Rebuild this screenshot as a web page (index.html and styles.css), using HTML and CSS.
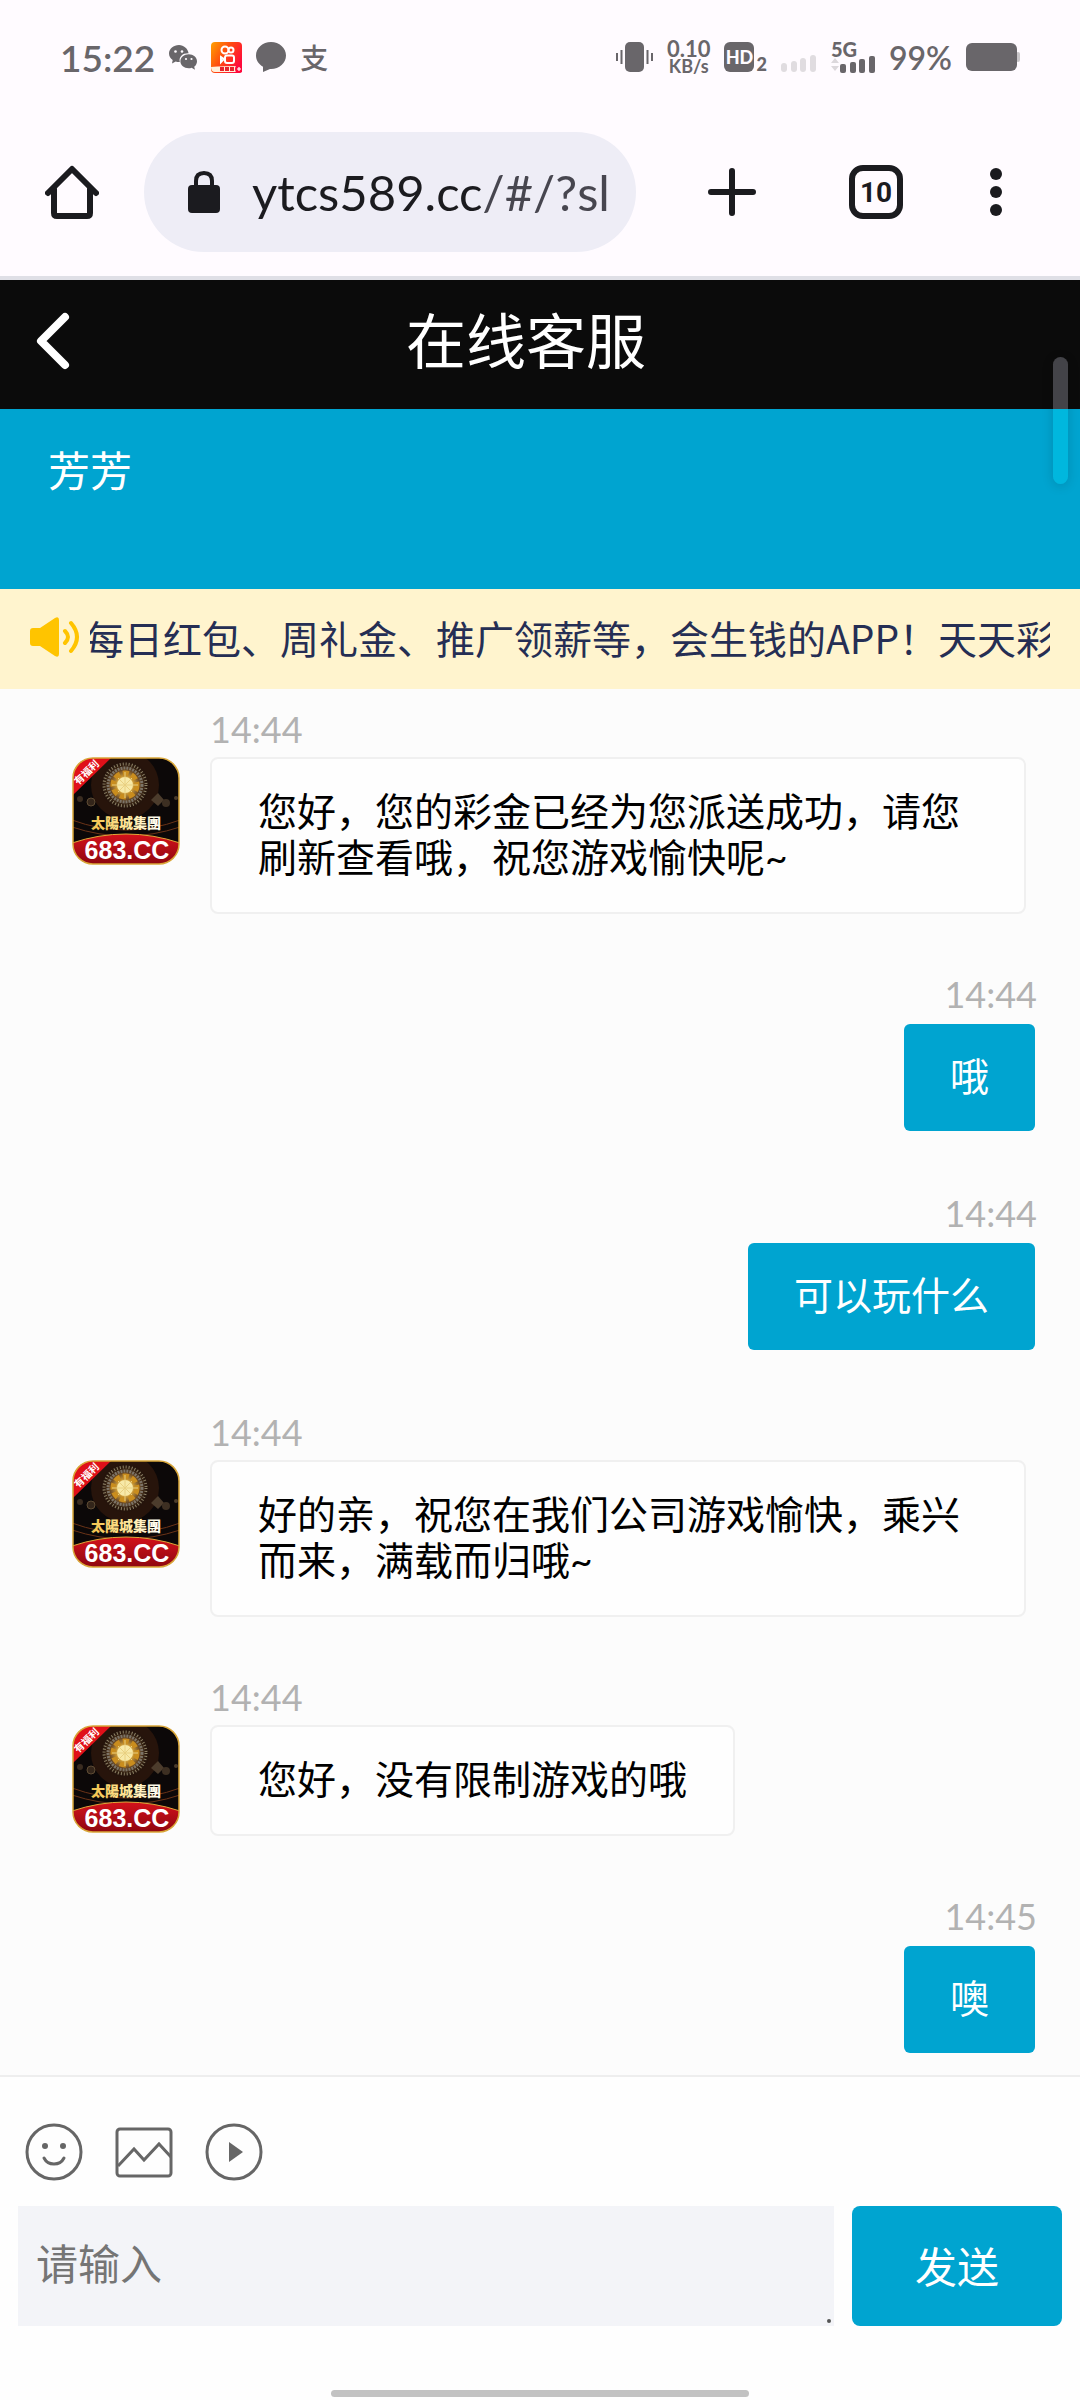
FILE: index.html
```html
<!DOCTYPE html>
<html lang="zh-CN">
<head>
    <meta charset="utf-8">
    <meta name="viewport" content="width=device-width, initial-scale=1">
    <title>在线客服</title>
    <link rel="stylesheet" href="styles.css">
</head>
<body>
    <div class="page">
        <div class="status">
            <div class="status-side">
                <span class="clock">15:22</span>
                <svg width="28" height="25" viewBox="0 0 28 25">
                    <path fill="#69666a" d="M10 0C4.500 0 0 3.800 0 8.500c0 2.700 1.500 5 3.700 6.500L3 18.500l3.700-2q1.600.5 3.300.5h.8C9.500 11.500 14 8 19.600 8.300 18.800 3.600 14.800 0 10 0z"/>
                    <path fill="#69666a" d="M19.700 9.300c-4.600 0-8.300 3.100-8.300 7s3.700 7 8.300 7q1.500 0 2.900-.5l3.400 2-.8-3c1.800-1.300 2.800-3.300 2.800-5.500 0-3.900-3.700-7-8.300-7z"/>
                    <g fill="#fffbff"><circle cx="6.500" cy="6.500" r="1.300"/><circle cx="13" cy="6.500" r="1.300"/><circle cx="17" cy="14" r="1.100"/><circle cx="22.500" cy="14" r="1.100"/></g>
                </svg>
                <svg width="31" height="31" viewBox="0 0 31 31">
                    <linearGradient id="ks" x1="0" y1="0" x2="1" y2="0.6">
                        <stop offset="0" stop-color="#ffa200"/>
                        <stop offset="0.5" stop-color="#ff4a10"/>
                        <stop offset="1" stop-color="#ff0a3c"/>
                    </linearGradient>
                    <rect width="31" height="31" rx="4" fill="url(#ks)"/>
                    <path d="M0 25q12-1 31-1l-3 5-4 1H4q-4 0-4-5z" fill="#fff0dc"/>
                    <path d="M9 27h14" stroke="#e8222c" stroke-width="4" stroke-dasharray="4 1"/>
                    <circle cx="28" cy="27" r="4" fill="#ff0a3c"/>
                    <path d="M28 25v4M26 27h4" stroke="#fff" stroke-width="1.200"/>
                    <g fill="none" stroke="#fff" stroke-width="2">
                        <circle cx="14" cy="8" r="3.500"/><circle cx="20" cy="8" r="2.500"/>
                        <rect x="14" y="13.500" width="9" height="7.500" rx="2"/><path d="M13 17l-3-2v5z"/>
                    </g>
                </svg>
                <svg width="30" height="30" viewBox="0 0 30 30">
                    <path fill="#69666a" d="M15 0C6.700 0 0 6 0 13.500c0 4.700 2.700 8.800 7 11.200L7 30l7-3h1c8.300 0 15-6 15-13.500S23.300 0 15 0z"/>
                </svg>
                <span class="pay">支</span>
            </div>
            <div class="status-side">
                <svg width="37" height="30" viewBox="0 0 37 30">
                    <rect x="9" width="19" height="30" rx="5" fill="#69666a"/>
                    <path d="M1 11v8M5.500 8v14M31.500 8v14M36 11v8" stroke="#69666a" stroke-width="2"/>
                </svg>
                <span class="rate">0.10<small>KB/s</small></span>
                <span class="hd"><b>HD</b><sub>2</sub></span>
                <svg width="36" height="30" viewBox="0 0 36 30" fill="#e0dce0">
                    <rect x="0" y="21" width="6" height="9" rx="3"/><rect x="10" y="19" width="6" height="11" rx="3"/>
                    <rect x="19" y="16" width="6" height="14" rx="3"/><rect x="29" y="13" width="6" height="17" rx="3"/>
                </svg>
                <span class="cell">5G
                    <svg width="44" height="17" viewBox="0 0 44 17" fill="#69666a">
                        <path d="M0 7l4-5 4 5zM0 10h8l-4 5z" fill="#dcd8dc"/>
                        <rect x="9" y="8" width="6" height="9" rx="2"/><rect x="19" y="6" width="6" height="11" rx="2"/>
                        <rect x="28" y="3" width="6" height="14" rx="2"/><rect x="38" y="0" width="6" height="17" rx="2"/>
                    </svg>
                </span>
                <span class="percent">99%</span>
                <svg width="54" height="28" viewBox="0 0 54 28">
                    <rect x="50" y="9" width="4" height="10" rx="2" fill="#c8c5c8"/>
                    <rect width="51" height="28" rx="6" fill="#69666a"/>
                </svg>
            </div>
        </div>

        <div class="browser">
            <button class="tool" aria-label="Home">
                <svg width="54" height="54" viewBox="0 0 54 54" fill="none" stroke="#1b1b1f" stroke-width="6" stroke-linecap="round" stroke-linejoin="round">
                    <path d="M3 28L27 4l24 24M9 24v24q0 3 3 3h30q3 0 3-3V24"/>
                </svg>
            </button>
            <label class="address">
                <svg width="32" height="42" viewBox="0 0 32 42">
                    <rect y="14" width="32" height="28" rx="4" fill="#1b1b1f"/>
                    <path d="M8 16v-6q0-8 8-8t8 8v6" fill="none" stroke="#1b1b1f" stroke-width="4"/>
                </svg>
                <input class="url" type="text" value="ytcs589.cc/#/?sl" aria-label="URL">
            </label>
            <button class="tool" aria-label="New tab">
                <svg width="48" height="48" viewBox="0 0 48 48" stroke="#1b1b1f" stroke-width="6" stroke-linecap="round">
                    <path d="M24 3v42M3 24h42"/>
                </svg>
            </button>
            <button class="tabs">10</button>
            <button class="tool" aria-label="Menu">
                <svg width="12" height="48" viewBox="0 0 12 48" fill="#1b1b1f">
                    <circle cx="6" cy="6" r="6"/><circle cx="6" cy="24" r="6"/><circle cx="6" cy="42" r="6"/>
                </svg>
            </button>
        </div>

        <header class="header">
            <button class="tool" aria-label="返回">
                <svg width="34" height="58" viewBox="0 0 34 58" fill="none" stroke="#fff" stroke-width="8" stroke-linecap="round" stroke-linejoin="round">
                    <path d="M29 5L5 29l24 24"/>
                </svg>
            </button>
            <h1>在线客服</h1>
            <div class="scroll-thumb"></div>
        </header>

        <div class="agent">芳芳</div>

        <div class="notice">
            <svg width="50" height="40" viewBox="0 0 50 40">
                <path d="M3 11h7L25 1q4-2 4 2v34q0 4-4 2L10 29H3q-3 0-3-3V14q0-3 3-3z" fill="#ffc400"/>
                <path d="M35 14q6 6 0 12M41 6q12 14 0 28" fill="none" stroke="#ffc400" stroke-width="4" stroke-linecap="round"/>
            </svg>
            <div class="marquee">每日红包、周礼金、推广领薪等，会生钱的APP！天天彩</div>
        </div>

        <main class="chat">
            <div class="msg">
                <!-- drawn once here, reused by the other messages -->
                <svg class="avatar" viewBox="0 0 108 108">
                    <defs>
                        <radialGradient id="glow">
                            <stop offset="0" stop-color="#fff3b0"/>
                            <stop offset="0.3" stop-color="#d9a63c"/>
                            <stop offset="0.6" stop-color="#6b4a25"/>
                            <stop offset="1" stop-color="#0c0808" stop-opacity="0"/>
                        </radialGradient>
                        <linearGradient id="red" x1="0" y1="0" x2="0" y2="1">
                            <stop offset="0" stop-color="#d3121b"/>
                            <stop offset="1" stop-color="#8c0710"/>
                        </linearGradient>
                        <linearGradient id="gold" x1="0" y1="0" x2="1" y2="0">
                            <stop offset="0" stop-color="#f3c34c"/>
                            <stop offset="0.55" stop-color="#ffe9a0"/>
                            <stop offset="1" stop-color="#ffffff"/>
                        </linearGradient>
                        <clipPath id="round"><rect x="1" y="1" width="106" height="106" rx="20"/></clipPath>
                    </defs>
                    <g id="avatar">
                        <g clip-path="url(#round)">
                            <rect width="108" height="108" fill="#0c0808"/>
                            <circle cx="53" cy="28" r="34" fill="#4a2410" opacity="0.45"/>
                            <circle cx="53" cy="28" r="25" fill="url(#glow)"/>
                            <circle cx="53" cy="28" r="21" fill="none" stroke="#8d8266" stroke-width="3" stroke-dasharray="1 2"/>
                            <circle cx="53" cy="28" r="17" fill="none" stroke="#7c7468" stroke-width="3" stroke-dasharray="2 1"/>
                            <circle cx="53" cy="28" r="12" fill="none" stroke="#c98d1e" stroke-width="5" stroke-dasharray="6 3"/>
                            <circle cx="53" cy="28" r="8" fill="#f7e9a8"/>
                            <path d="M53 15v26M40 28h26M46 21l14 14M60 21L46 35" stroke="#e8cf80" stroke-width="1"/>
                            <circle cx="19" cy="45" r="4" fill="#33251a" stroke="#5e4b33"/>
                            <circle cx="8" cy="42" r="3" fill="#3a2c20"/>
                            <path d="M79 43l7-7 6 7-6 6z" fill="#4c3c2c"/>
                            <circle cx="94" cy="46" r="4" fill="#3d2f22"/>
                            <circle cx="104" cy="41" r="2" fill="#4c3c2c"/>
                            <path d="M0 63q54 20 108 0M0 70q54 18 108 0" fill="none" stroke="#6b3418"/>
                            <path d="M0 0h40L0 39z" fill="#e01019"/>
                            <path d="M0 86q54-18 108 0v22H0z" fill="url(#red)" stroke="#e0a83a" stroke-width="1"/>
                        </g>
                        <text class="tag" transform="translate(17 18) rotate(-44)" text-anchor="middle">有福利</text>
                        <text class="club" x="54" y="71" text-anchor="middle" fill="url(#gold)">太陽城集團</text>
                        <text class="site" x="55" y="102" text-anchor="middle">683.CC</text>
                        <rect x="1" y="1" width="106" height="106" rx="20" fill="none" stroke="#d9a638" stroke-width="1.5"/>
                    </g>
                </svg>
                <div class="body">
                    <time>14:44</time>
                    <p class="bubble">您好，您的彩金已经为您派送成功，请您刷新查看哦，祝您游戏愉快呢~</p>
                </div>
            </div>
            <div class="msg mine">
                <div class="body">
                    <time>14:44</time>
                    <p class="bubble">哦</p>
                </div>
            </div>
            <div class="msg mine">
                <div class="body">
                    <time>14:44</time>
                    <p class="bubble">可以玩什么</p>
                </div>
            </div>
            <div class="msg">
                <svg class="avatar" viewBox="0 0 108 108"><use href="#avatar"/></svg>
                <div class="body">
                    <time>14:44</time>
                    <p class="bubble">好的亲，祝您在我们公司游戏愉快，乘兴而来，满载而归哦~</p>
                </div>
            </div>
            <div class="msg">
                <svg class="avatar" viewBox="0 0 108 108"><use href="#avatar"/></svg>
                <div class="body">
                    <time>14:44</time>
                    <p class="bubble">您好，没有限制游戏的哦</p>
                </div>
            </div>
            <div class="msg mine">
                <div class="body">
                    <time>14:45</time>
                    <p class="bubble">噢</p>
                </div>
            </div>
        </main>

        <footer class="footer">
            <div class="tools">
                <button class="tool" aria-label="表情">
                    <svg width="58" height="58" viewBox="0 0 58 58" fill="none" stroke="#666" stroke-width="3">
                        <circle cx="29" cy="29" r="27"/>
                        <path d="M19 35q3 6 10 6t10-6" stroke-linecap="round"/>
                        <circle cx="20" cy="23" r="3" fill="#666" stroke="none"/><circle cx="38" cy="23" r="3" fill="#666" stroke="none"/>
                    </svg>
                </button>
                <button class="tool" aria-label="图片">
                    <svg width="58" height="58" viewBox="0 0 58 58" fill="none" stroke="#666" stroke-width="3">
                        <rect x="2" y="6" width="54" height="47" rx="3"/>
                        <path d="M3 43l16-17 10 11 15-16 12 13"/>
                    </svg>
                </button>
                <button class="tool" aria-label="视频">
                    <svg width="58" height="58" viewBox="0 0 58 58" fill="none" stroke="#666" stroke-width="3">
                        <circle cx="29" cy="29" r="27"/>
                        <path d="M24 19l14 10-14 10z" fill="#666" stroke="none"/>
                    </svg>
                </button>
            </div>
            <form class="send-row" onsubmit="return false">
                <div class="field">
                    <textarea rows="1" placeholder="请输入" aria-label="请输入"></textarea>
                </div>
                <button class="send" type="submit">发送</button>
            </form>
            <div class="home-bar"></div>
        </footer>
    </div>
</body>
</html>
```
FILE: styles.css
```css
* {
    box-sizing: border-box;
}
body {
    margin: 0;
    font-family: Lato, "Noto Sans CJK SC", sans-serif;
    font-size: 39px;
    background: #fcfcfc;
}
button {
    border: none;
    padding: 0;
    font-family: inherit;
    cursor: pointer;
}
svg {
    display: block;
    flex-shrink: 0;
}
.page {
    min-height: 100vh;
    display: flex;
    flex-direction: column;
}
.tool {
    background: none;
}

/* status bar */
.status {
    display: flex;
    justify-content: space-between;
    height: 108px;
    padding: 6px 60px 0;
    background: #fffbff;
    color: #69666a;
}
.status-side {
    display: flex;
    align-items: center;
    gap: 14px;
}
.clock {
    font-size: 37px;
    font-weight: 600;
}
.pay {
    font-size: 28px;
    font-weight: 500;
}
.rate {
    font-size: 22px;
    line-height: 18px;
    font-weight: 700;
    text-align: center;
}
.rate small {
    display: block;
    font-size: 18px;
    line-height: 16px;
}
.hd {
    display: flex;
    align-items: flex-end;
    gap: 2px;
}
.hd b {
    width: 30px;
    border-radius: 6px;
    background: #69666a;
    color: #fffbff;
    font-size: 18px;
    line-height: 30px;
    font-weight: 900;
    text-align: center;
}
.hd sub {
    font-size: 18px;
    line-height: 16px;
    font-weight: 900;
}
.cell {
    font-size: 20px;
    line-height: 14px;
    font-weight: 900;
}
.percent {
    font-size: 32px;
    font-weight: 600;
}

/* browser toolbar */
.browser {
    display: flex;
    align-items: center;
    padding: 24px 78px 24px 45px;
    background: #fffbff;
    border-bottom: 4px solid #dfdfe6;
}
.address {
    flex: 1;
    min-width: 0;
    display: flex;
    align-items: center;
    gap: 32px;
    height: 120px;
    margin: 0 72px 0 45px;
    padding: 0 24px 0 44px;
    border-radius: 60px;
    background: #eeedf6;
}
.url {
    flex: 1;
    min-width: 0;
    border: none;
    padding: 0;
    outline: none;
    font-family: inherit;
    font-size: 49px;
    line-height: 60px;
    /* host dark, path lighter */
    background: linear-gradient(90deg, #1b1b1f 233px, #47464f 233px);
    -webkit-background-clip: text;
    background-clip: text;
    color: transparent;
}
.tabs {
    width: 54px;
    height: 54px;
    margin: 0 87px 0 93px;
    border: 6px solid #1b1b1f;
    border-radius: 14px;
    background: none;
    color: #1b1b1f;
    font-family: Roboto, sans-serif;
    font-size: 28px;
    font-weight: 700;
}

/* chat header */
.header {
    position: relative;
    display: flex;
    align-items: center;
    height: 129px;
    padding: 0 98px 8px 36px;
    background: #0b0b0b;
    color: #fff;
}
.header h1 {
    flex: 1;
    margin: 0;
    font-size: 60px;
    line-height: 80px;
    font-weight: 400;
    text-align: center;
}
.scroll-thumb {
    position: absolute;
    top: 77px;
    right: 12px;
    width: 15px;
    height: 127px;
    border-radius: 8px;
    background: linear-gradient(#434348 52px, #00b7de 52px);
    box-shadow: 0 2px 12px rgba(0, 0, 0, 0.15);
}
.agent {
    height: 180px;
    padding: 32px 48px;
    background: #00a4d0;
    color: #fff;
    font-size: 42px;
    line-height: 60px;
}
.notice {
    display: flex;
    align-items: center;
    gap: 10px;
    padding: 18px 30px 22px;
    background: #fff4ce;
    color: #252e54;
}
.marquee {
    flex: 1;
    overflow: hidden;
    white-space: nowrap;
    text-indent: -5px;
    line-height: 60px;
    font-family: "Noto Sans CJK SC", sans-serif;
}

/* messages */
.chat {
    flex: 1;
    padding: 16px 43px 0 72px;
    background: #fcfcfc;
}
.msg {
    display: flex;
    align-items: flex-start;
    gap: 30px;
    margin-bottom: 56px;
}
.msg:last-child {
    margin-bottom: 18px;
}
.avatar {
    width: 108px;
    height: 108px;
    margin-top: 52px;
}
.body {
    display: flex;
    flex-direction: column;
    align-items: flex-start;
    gap: 4px;
    max-width: 816px;
}
.body time {
    color: #b2b2b2;
    font-size: 36px;
    line-height: 48px;
}
.bubble {
    margin: 0;
    padding: 29px 46px 32px;
    border: 2px solid #f0f0f0;
    border-radius: 8px;
    background: #fefefe;
    background-clip: padding-box;
    color: #000;
    line-height: 46px;
}
.mine {
    justify-content: flex-end;
}
.mine .body {
    align-items: flex-end;
}
.mine .bubble {
    border-color: transparent;
    background-color: #00a4d0;
    color: #fff;
}
.tag {
    font-size: 10px;
    font-weight: 700;
    fill: #fff;
}
.club {
    font-size: 14px;
    font-weight: 900;
}
.site {
    font-family: "Liberation Sans", sans-serif;
    font-size: 25px;
    font-weight: 700;
    fill: #fff;
}

/* input area */
.footer {
    padding: 46px 18px 3px;
    border-top: 2px solid #eee;
    background: #fefefe;
}
.tools {
    display: flex;
    gap: 32px;
    padding: 0 7px;
    margin-bottom: 25px;
}
.send-row {
    display: flex;
    gap: 18px;
}
.field {
    position: relative;
    flex: 1;
}
.field::after {
    content: "";
    position: absolute;
    right: 3px;
    bottom: 3px;
    width: 4px;
    height: 4px;
    border-radius: 2px;
    background: #555;
}
.field textarea {
    display: block;
    width: 100%;
    height: 120px;
    padding: 28px 18px;
    border: none;
    outline: none;
    resize: none;
    background: #f3f4f8;
    font-family: inherit;
    font-size: 42px;
    line-height: 60px;
}
.field textarea::placeholder {
    color: #757575;
}
.send {
    width: 210px;
    padding-bottom: 4px;
    border-radius: 8px;
    background: #00a4d0;
    color: #fff;
    font-size: 42px;
}
.home-bar {
    width: 40%;
    height: 7px;
    margin: 64px auto 0;
    border-radius: 4px;
    background: #c2c2c2;
}
```
